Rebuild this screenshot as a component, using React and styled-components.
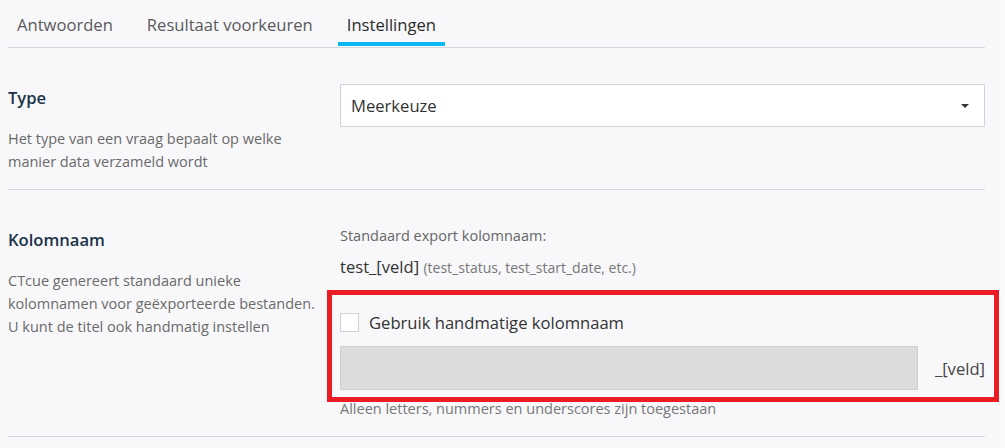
import React, { useState } from "react"
import styled, { createGlobalStyle } from 'styled-components'

const GlobalStyle = createGlobalStyle`
  body {
    margin: 0;
    background: #fafafb;
    font-family: "Open Sans", "Noto Sans", sans-serif;
  }
`

const tabs = ['Antwoorden', 'Resultaat voorkeuren', 'Instellingen']

const App = () => {
  const [active, setActive] = useState(2)
  const [manual, setManual] = useState(false)

  return (
    <Page>
      <GlobalStyle />
      <TabBar>
        {tabs.map((t, i) => (
          <Tab key={t} $active={i === active} onClick={() => setActive(i)}>{t}</Tab>
        ))}
      </TabBar>

      <Row $bottom={16}>
        <Side>
          <Heading>Type</Heading>
          <Description>
            Het type van een vraag bepaalt op welke<br />manier data verzameld wordt
          </Description>
        </Side>
        <Field>
          <Select>
            <span>Meerkeuze</span>
            <Caret />
          </Select>
        </Field>
      </Row>

      <Row $bottom={17}>
        <Side>
          <Heading>Kolomnaam</Heading>
          <Description>
            CTcue genereert standaard unieke<br />kolomnamen voor geëxporteerde bestanden.<br />U kunt de titel ook handmatig instellen
          </Description>
        </Side>
        <Field>
          <Label>Standaard export kolomnaam:</Label>
          <Example>
            test_[veld] <small>(test_status, test_start_date, etc.)</small>
          </Example>
          <Highlighted>
            <CheckRow onClick={() => setManual(!manual)}>
              <Checkbox $checked={manual} />
              Gebruik handmatige kolomnaam
            </CheckRow>
            <InputRow>
              <NameInput disabled={!manual} />
              <Suffix>_[veld]</Suffix>
            </InputRow>
            <Frame />
          </Highlighted>
          <Hint>Alleen letters, nummers en underscores zijn toegestaan</Hint>
        </Field>
      </Row>
    </Page>
  )
}

const Page = styled.div`
  width: 1000px;
  min-height: 448px;
  background: #f8f8fa;
  padding: 0 15px 0 8px;
  box-sizing: border-box;
`

const TabBar = styled.nav`
  display: flex;
  gap: 16px;
  height: 48px;
  border-bottom: 1px solid #d6d6de;
  box-sizing: border-box;
`

const Tab = styled.div`
  padding: 6px 9px 0;
  display: flex;
  align-items: center;
  font-size: 16.6px;
  color: ${p => p.$active ? '#2b2b2b' : '#5a5a5a'};
  border-bottom: 4px solid ${p => p.$active ? '#0cb8f2' : 'transparent'};
  margin-bottom: 1px;
  cursor: pointer;
`

const Row = styled.section`
  display: grid;
  grid-template-columns: 312px 1fr;
  column-gap: 20px;
  border-bottom: 1px solid #d6d6de;
  padding: 36px 0 ${p => p.$bottom}px;
`

const Side = styled.div`
  padding-top: 2px;
`

const Heading = styled.h3`
  margin: 0;
  font-size: 16.6px;
  font-weight: 600;
  line-height: 24px;
  color: #1b3348;
`

const Description = styled.p`
  margin: 17px 0 0;
  font-size: 14.5px;
  line-height: 23px;
  color: #6a6a6a;
`

const Field = styled.div`
  display: flex;
  flex-direction: column;
`

const Select = styled.div`
  height: 43px;
  background: #fff;
  border: 1px solid #d3d3db;
  box-sizing: border-box;
  display: flex;
  align-items: center;
  justify-content: space-between;
  padding: 0 15px 0 10px;
  font-size: 16.6px;
  color: #333;
`

const Caret = styled.span`
  width: 0;
  height: 0;
  border-left: 4px solid transparent;
  border-right: 4px solid transparent;
  border-top: 4px solid #333;
`

const Label = styled.div`
  font-size: 14.5px;
  line-height: 20px;
  color: #666;
`

const Example = styled.div`
  margin-top: 10px;
  font-size: 16.6px;
  line-height: 22px;
  color: #333;
  small {
    font-size: 14px;
    color: #777;
  }
`

const Highlighted = styled.div`
  position: relative;
  margin-top: 34px;
`

const Frame = styled.div`
  position: absolute;
  top: -23px;
  left: -13px;
  right: -14px;
  bottom: -12px;
  border: 5px solid #ec1c24;
  pointer-events: none;
`

const CheckRow = styled.label`
  display: flex;
  align-items: center;
  gap: 10px;
  height: 19px;
  font-size: 16.6px;
  color: #333;
  cursor: pointer;
`

const Checkbox = styled.span`
  width: 19px;
  height: 19px;
  box-sizing: border-box;
  background: ${p => p.$checked ? '#0cb8f2' : '#fff'};
  border: 1px solid #cfcfd6;
`

const InputRow = styled.div`
  display: flex;
  align-items: center;
  gap: 17px;
  margin-top: 14px;
`

const NameInput = styled.input`
  flex: 1;
  height: 44px;
  box-sizing: border-box;
  border: 1px solid #cdcdd2;
  background: ${p => p.disabled ? '#dcdcdc' : '#fff'};
  font: inherit;
  padding: 0 10px;
`

const Suffix = styled.span`
  font-size: 16.6px;
  color: #444;
`

const Hint = styled.div`
  margin-top: 9px;
  font-size: 14.5px;
  line-height: 20px;
  color: #777;
`

export default App
